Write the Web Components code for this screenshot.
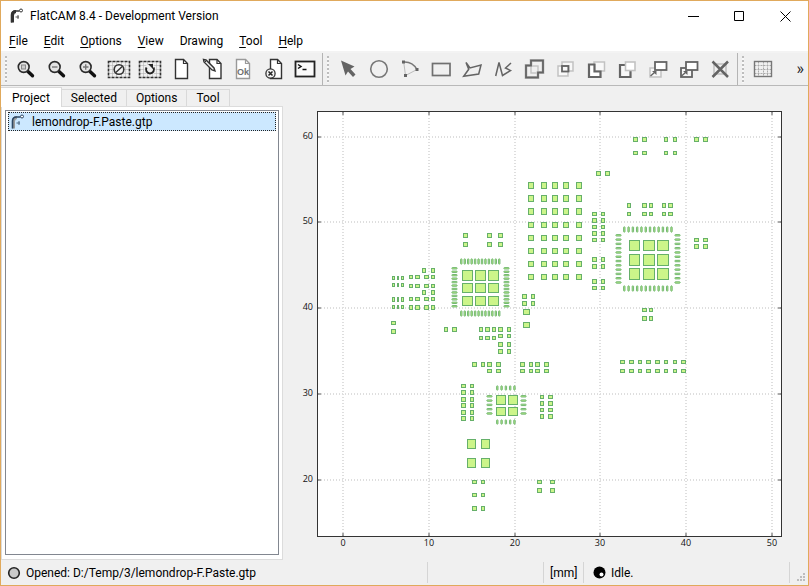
<!DOCTYPE html>
<html lang="en">
<head>
<meta charset="utf-8">
<title>FlatCAM 8.4 - Development Version</title>
<style>
  html, body { margin: 0; height: 100%; }
  body { font: 12px/16px Roboto, "Open Sans", sans-serif; color: #000; background: #f0f0f0; }
</style>
</head>
<body>
<app-window>
  <title-bar slot="top">FlatCAM 8.4 - Development Version</title-bar>
  <menu-bar slot="top"></menu-bar>
  <tool-bar slot="top"></tool-bar>
  <side-panel slot="side"><project-tree></project-tree></side-panel>
  <plot-canvas slot="main"></plot-canvas>
  <status-bar slot="bottom"></status-bar>
</app-window>
<script>
const RESET = `*,:host{box-sizing:border-box} button{font:inherit;color:inherit;background:none;border:0;padding:0;margin:0} svg{display:block}`;
function define(name, css, html) {
  customElements.define(name, class extends HTMLElement {
    constructor() {
      super();
      const t = document.createElement('template');
      t.innerHTML = `<style>${RESET}${css}</style>` + (typeof html === 'function' ? html(this) : html);
      this.attachShadow({ mode: 'open' }).append(t.content.cloneNode(true));
    }
  });
}

/* ---------- icons ---------- */
const lens = inner => `<path d="M14 14.5L18.5 18.800" stroke="#111" stroke-width="3.4" stroke-linecap="round"/><circle cx="9.7" cy="10" r="5.400" fill="#e4e4e4" stroke="#2b2b2b" stroke-width="1.6"/>${inner}`;
const sheet = (x, c = '#333', w = 12) => `<path d="M${x} 2.5h${w - 4}l4 4v15h-${w}z" fill="#fff" stroke="${c}" stroke-width="1.4"/><path d="M${x + w - 4} 2.5v4h4" fill="none" stroke="${c}" stroke-width="1.2"/>`;
const mesh = inner => `<path d="M1.5 8.5h21M1.5 12.5h21M1.5 16.5h21M5.5 4.5v16M9.5 4.5v16M14.5 4.5v16M18.5 4.5v16" stroke="#aaa" stroke-dasharray="1 1"/><rect x="1.5" y="4.5" width="21" height="16" fill="none" stroke="#333" stroke-width="1.6" stroke-dasharray="3 1"/>${inner}`;
const box = (x, y, w, h, c, s = 1.6, f = 'none') => `<rect x="${x}" y="${y}" width="${w}" height="${h}" fill="${f}" stroke="${c}" stroke-width="${s}"/>`;
const D = '#646464', L = '#c2c2c2';
const ARROW = `<path d="M4.500 19L8.500 15.500" stroke="${D}" stroke-width="1.4"/><path d="M6 14h4.500v4z" fill="${D}"/>`;
const ICONS = {
  fit: lens('<rect x="7.5" y="8" width="4" height="4" fill="#ccc" stroke="#888"/>'),
  out: lens('<path d="M7 10h5.500" stroke="#777" stroke-width="1.4"/>'),
  in: lens('<path d="M7 10h5.500M9.700 7.300v5.500" stroke="#777" stroke-width="1.4"/>'),
  clear: mesh('<circle cx="12" cy="12.5" r="4.8" fill="#f4f4f4" stroke="#333" stroke-width="1.6"/><path d="M8.8 15.5l6.4-6" stroke="#333" stroke-width="1.4"/>'),
  replot: mesh('<circle cx="12" cy="12.5" r="5.5" fill="#eee"/><path d="M8.500 10.500a4 4 0 1 0 7 0" fill="none" stroke="#222" stroke-width="2"/><path d="M10 7h5v5z" fill="#222"/>'),
  new: sheet(6.5),
  edit: sheet(9.5, '#333', 11.5) + '<path d="M3.5 2.5l2.5.5 8 8 1 3-3-1-8-8z" fill="#f3f3f3" stroke="#333" stroke-width="1.4"/><path d="M6.5 3.5l-2 2" stroke="#333"/>',
  ok: sheet(5.5, '#999', 13) + '<text x="12" y="18" text-anchor="middle" font-family="Liberation Sans" font-weight="700" font-size="9" fill="#707070">Ok</text>',
  del: sheet(8.5, '#333', 11) + '<circle cx="8.5" cy="16.5" r="4.6" fill="#f4f4f4" stroke="#333" stroke-width="1.3"/><path d="M6.5 14.5l4 4m0-4l-4 4" stroke="#222" stroke-width="1.5"/>',
  shell: '<rect x="2.5" y="4.5" width="19" height="15" fill="#fafafa" stroke="#222" stroke-width="1.8"/><path d="M5 7.5l3 2-3 2M9.5 12.5h4" fill="none" stroke="#111" stroke-width="1.5"/>',
  select: `<path d="M5 3.5l13.5 6-4 2.500 5 5.500-2.500 2.500-5-5.500-2.500 4z" fill="${D}"/>`,
  circle: `<circle cx="12" cy="12" r="8.3" fill="none" stroke="#777" stroke-width="1.6"/>`,
  arc: `<path d="M5.7 5L7.5 18.5 19 12.5" fill="none" stroke="#bbb"/><path d="M5.7 5Q14.5 4.500 19 12.500" fill="none" stroke="#777" stroke-width="1.4"/><path d="M4 3.500h3v3H4zM17.500 11h3v3h-3zM6 17h3v3H6z" fill="${D}"/>`,
  rect: box(3.5, 6.5, 17.5, 12, '#707070', 1.7),
  poly: `<path d="M6 5.500l4 5.500 11-3-2.300 9-15 2.300 5-7z" fill="none" stroke="${D}" stroke-width="1.5"/>`,
  path: `<path d="M4.700 19L8 5.500l3.500 13 8-5-5-2.500 5.500-5" fill="none" stroke="${D}" stroke-width="1.5"/>`,
  union: box(9, 9, 7, 7, L, 1.4) + `<path d="M9 3.500h12v12h-5v5H4v-12h5z" fill="none" stroke="#ccc" stroke-width="3"/><path d="M9 3.500h12v12h-5v5H4v-12h5z" fill="none" stroke="${D}" stroke-width="1.8"/>`,
  inter: box(9, 5, 11, 9, L, 1.5, '#f8f8f8') + box(5, 9, 10, 10, L, 1.5, '#f8f8f8') + box(9, 9, 6.5, 5.5, D, 1.8),
  sub: box(10, 5, 10.5, 9, L, 1.5, '#f8f8f8') + `<path d="M5 7.500h5.500v7h6v5.500h-11.500z" fill="#fff" stroke="${D}" stroke-width="2.2"/>`,
  cut: `<path d="M10 8H5v12h10.500v-6" fill="#f8f8f8" stroke="${D}" stroke-width="2.200"/>` + box(10.5, 5, 9.5, 8.5, L, 1.6, '#fff'),
  move: box(4, 11, 11, 9, L, 1.5, '#f8f8f8') + box(9, 5, 11.5, 8, D, 1.8, '#fff') + ARROW,
  copy: box(4, 11, 11, 9, D, 1.8, '#f8f8f8') + box(9, 5, 11.5, 8, D, 1.8, '#fff') + ARROW,
  erase: box(6, 7, 12, 10, '#bbb', 1.4) + `<path d="M4.500 4.500l15.500 15.500M20 4.500L4.500 20" stroke="${D}" stroke-width="2.500"/>`,
  grid: `<path d="M3.500 8.500h17M3.500 12.500h17M3.500 16.500h17M7.500 4.500v15M12.500 4.500v15M16.500 4.500v15" stroke="#aaa" stroke-dasharray="2 1"/>` + box(3.5, 4.5, 17, 15, '#777', 1.4)
};
const LOGO = c => `<svg width="16" height="16" viewBox="0 0 16 16" aria-hidden="true"><path d="M3.500 14.500V7.500Q3.500 3.500 7 3.500" fill="none" stroke="#999" stroke-width="3"/><path d="M2.500 14.500V7Q2.500 3 6.500 3H10.500" fill="none" stroke="${c}" stroke-width="1.600"/><circle cx="12" cy="2.500" r="1.500" fill="#fff" stroke="${c}"/><path d="M6.500 9h3.500M9 7v4" stroke="${c}" opacity=".8"/></svg>`;

/* ---------- frame ---------- */
define('app-window', `
  :host{display:flex;flex-direction:column;height:100vh;border:1px solid #e0a95c;background:#f0f0f0}
  main{flex:1;display:flex;min-height:0}
  ::slotted([slot=main]){flex:1;min-width:0}`,
  `<slot name="top"></slot><main><slot name="side"></slot><slot name="main"></slot></main><slot name="bottom"></slot>`);

define('title-bar', `
  :host{display:flex;align-items:center;height:30px;background:#fff;padding-left:8px}
  h1{font:inherit;margin:0 0 0 5px;flex:1}
  button{width:46px;height:30px;display:grid;place-items:center}
  path{fill:none;stroke:#000}
  svg[aria-hidden] path{stroke:#333}`,
  `${LOGO('#333')}<h1><slot></slot></h1>
  <button aria-label="Minimize"><svg width="11" height="11"><path d="M0 5.500h11"/></svg></button>
  <button aria-label="Maximize"><svg width="11" height="11"><path d="M.5 .5h9v9h-9z"/></svg></button>
  <button aria-label="Close"><svg width="11" height="11"><path d="M.5 .5l10 10M10.500 .5l-10 10"/></svg></button>`);

define('menu-bar', `
  :host{display:block;background:#fff;border-bottom:2px solid #f3f3f3}
  nav{display:flex;height:20px}
  button{padding:0 8px}
  u{text-underline-offset:2px}`,
  `<nav><button><u>F</u>ile</button><button><u>E</u>dit</button><button><u>O</u>ptions</button><button><u>V</u>iew</button><button>Drawing</button><button><u>T</u>ool</button><button><u>H</u>elp</button></nav>`);

define('tool-button', `
  :host{display:block} button{display:grid;place-items:center;width:31px;height:32px}`,
  el => `<button aria-label="${el.getAttribute('label')}"><svg width="24" height="24" viewBox="0 0 24 24" aria-hidden="true">${ICONS[el.getAttribute('icon')]}</svg></button>`);

const tools = list => list.map(([i, l]) => `<tool-button icon="${i}" label="${l}"></tool-button>`).join('');
define('tool-bar', `
  :host{display:flex;height:33px;border-bottom:1px solid #b9b9b9;background:#f0f0f0;overflow:hidden}
  div{display:flex;border-right:1px solid #b4b4b4;padding-right:2px}
  div:last-of-type{border:0}
  div::before{content:"";width:2px;margin:3px 3px 2px 4px;background:repeating-linear-gradient(#bdbdbd 0 2px,#f8f8f8 2px 4px)}
  .more{margin-left:auto;padding:0 4px 0 0;font-size:16px;color:#222}`,
  `<div>${tools([['fit','Zoom fit'],['out','Zoom out'],['in','Zoom in'],['clear','Clear plot'],['replot','Replot'],['new','New geometry'],['edit','Edit geometry'],['ok','Update geometry'],['del','Delete'],['shell','Command line']])}</div>
   <div>${tools([['select','Select'],['circle','Add circle'],['arc','Add arc'],['rect','Add rectangle'],['poly','Add polygon'],['path','Add path'],['union','Union'],['inter','Intersection'],['sub','Subtraction'],['cut','Cut path'],['move','Move objects'],['copy','Copy objects'],['erase','Delete shape']])}</div>
   <div>${tools([['grid','Snap to grid']])}</div><button class="more" aria-label="More tools">»</button>`);

define('side-panel', `
  :host{display:flex;flex-direction:column;width:282px;flex:none}
  .tabs{display:flex;align-items:flex-end;height:20px}
  button{height:17px;padding:0 9px;border:1px solid #d9d9d9;border-width:1px 1px 0 0}
  button[aria-selected=true]{height:20px;padding:0 11px;background:#fff;margin-bottom:-1px;z-index:1}
  section{flex:1;display:flex;background:#fff;border:1px solid #dcdcdc;padding:3px 3px 4px;min-height:0}
  ::slotted(*){flex:1}`,
  `<div class="tabs" role="tablist"><button role="tab" aria-selected="true">Project</button><button role="tab">Selected</button><button role="tab">Options</button><button role="tab">Tool</button></div>
   <section role="tabpanel"><slot></slot></section>`);

define('project-tree', `
  :host{display:block;border:1px solid #828790;background:#fff;padding:1px 2px}
  button{display:flex;align-items:center;gap:6px;width:100%;height:19px;padding-left:1px;background:#cce8ff;border:1px dotted #222;text-align:left}`,
  `<button>${LOGO('#2d4763')}lemondrop-F.Paste.gtp</button>`);

/* ---------- plot: pads are grouped as [columns, rows], each entry "position:size" ---------- */
const PADS = [
  ['422:4 431:4', '268:5 290:5'],
  ['409:4 415:5 424:5 431:4', '275:4 284:4 297:4 305:5'],
  ['392:3 397:2 401:3', '276:4 283:4 297:5 305:4'],
  ['391:5', '321:4 329:5'],
  ['463:5 487:5 498:5', '233:5 242:5'],
  ['462:11 475:11 488:11', '270:11 283:10 296:10'],
  ['522:5 531:4', '294:5 301:5'], ['523:7', '309:6 322:6'],
  ['528:6 541:6 552:6 563:6 576:6', '182:7 195:7 208:7 222:6 235:6 248:6 261:6 274:6'],
  ['596:5 605:5', '171:5'],
  ['592:5 601:4', '212:4 218:5 225:4 231:5 238:4 257:5 264:5 279:5 286:4'],
  ['633:5 642:5 664:4 673:4', '137:5 151:4'], ['694:5 703:5', '137:5 238:4 244:5'],
  ['627:4 642:5 649:4 662:4 668:5', '203:5 212:4'],
  ['629:11 643:12 657:12', '240:11 254:12 268:12'],
  ['444:4 452:5', '327:5'], ['479:4 485:5 492:4', '327:5 336:4'], ['498:5 507:4', '327:5 334:4 342:5 349:5'],
  ['472:5 481:4', '362:5 480:4 493:4 506:5'], ['487:5 496:5 520:5 529:4 535:5 544:5', '362:5 369:4'],
  ['496:10 508:10', '395:10 407:9'],
  ['461:5 470:4', '384:4 390:5 397:5 403:5 410:5 416:5'],
  ['540:4 548:5', '395:4 401:5 408:4 414:5'],
  ['467:9 481:9', '439:10 458:10'], ['537:5 550:5', '480:4 488:5'],
  ['642:5 649:4', '308:4 316:5'],
  ['620:5 629:5 638:4 646:5 655:5 664:4 673:4 681:5', '360:4 369:4']
];
/* pin rows: [horizontal?, start, cross positions, count, pitch, pin length] */
const PINS = [
  [1, 460, [258, 310], 12, 3.45, 7], [0, 267, [451, 503], 12, 3.45, 7],
  [1, 623, [226, 285], 12, 4.29, 7], [0, 234, [615, 674], 12, 4.29, 7],
  [1, 496, [385, 419], 5, 4.29, 6], [0, 395, [486, 520], 5, 4.29, 7]
];
const parse = s => s.split(' ').map(v => v.split(':').map(Number));
const pads = PADS.map(([c, r]) => parse(c).flatMap(([x, w]) => parse(r).map(([y, h]) =>
  `<rect x="${x + .5}" y="${y + .5}" width="${w - 1}" height="${h - 1}"/>`)).join('')).join('');
const pins = PINS.map(([hor, s, at, n, p, len]) => at.map(a => Array.from({ length: n }, (_, i) => {
  const q = s + i * p + .6;
  return hor ? `<rect x="${q}" y="${a + .8}" width="1.400" height="${len - 1.6}" rx=".7"/>` : `<rect x="${a + .8}" y="${q}" width="${len - 1.6}" height="1.400" rx=".7"/>`;
}).join('')).join('')).join('');
const XT = [[343, 0], [429, 10], [515, 20], [600, 30], [686, 40], [772, 50]];
const YT = [[137, 60], [222, 50], [308, 40], [394, 30], [480, 20]];
define('plot-canvas', `
  :host{display:block} svg{width:100%;height:100%}
  .grid{stroke:#dedede;stroke-width:2;stroke-dasharray:1 2}
  .tick{stroke:#555}
  .pads{fill:#ccf58a;stroke:#66b06a}
  .pins{fill:#c4f08a;stroke:#66b06a;stroke-opacity:.9}
  text{font-size:9px;fill:#111;font-family:"Open Sans",sans-serif}`,
  `<svg viewBox="283 86 525 474" role="img" aria-label="Paste layer plot">
    <rect x="317.500" y="111.500" width="464" height="425" fill="#fff"/>
    <g class="grid">${XT.map(([x]) => `<path d="M${x} 112V536"/>`).join('')}${YT.map(([y]) => `<path d="M318 ${y}H781"/>`).join('')}</g>
    <g class="pads">${pads}</g><g class="pins">${pins}</g>
    <rect x="317.500" y="111.500" width="464" height="425" fill="none" stroke="#333"/>
    <g class="tick">${XT.map(([x]) => `<path d="M${x} 536v-3M${x} 112v3"/>`).join('')}${YT.map(([y]) => `<path d="M318 ${y}h3M781 ${y}h-3"/>`).join('')}</g>
    <g text-anchor="middle">${XT.map(([x, t]) => `<text x="${x}" y="546">${t}</text>`).join('')}</g>
    <g text-anchor="end">${YT.map(([y, t]) => `<text x="313" y="${y + 2}">${t}</text>`).join('')}</g>
  </svg>`);

define('status-bar', `
  :host{display:flex;align-items:center;height:25px}
  span{display:flex;align-items:center;gap:5px;height:21px;border-left:1px solid #d5d5d5;padding-left:6px}
  .msg{flex:1;border:0}
  .gap{width:116px} .unit{width:40px} .state{width:206px;padding-left:9px}
  .grip{width:19px;padding:9px 0 0 7px}`,
  `<span class="msg"><svg width="14" height="14"><circle cx="7" cy="7" r="5.300" fill="#c9c9c9" stroke="#222" stroke-width="1.600"/></svg>Opened: D:/Temp/3/lemondrop-F.Paste.gtp</span>
   <span class="gap"></span><span class="unit">[mm]</span>
   <span class="state"><svg width="13" height="13"><circle cx="6.500" cy="6.500" r="6" fill="#000"/><circle cx="8.500" cy="8.500" r="2" fill="#fff"/></svg>Idle.</span>
   <span class="grip"><svg width="9" height="9" fill="#bdbdbd"><path d="M6 0h2v2H6zM3 3h2v2H3zM6 3h2v2H6zM0 6h2v2H0zM3 6h2v2H3zM6 6h2v2H6z"/></svg></span>`);
</script>
</body>
</html>
